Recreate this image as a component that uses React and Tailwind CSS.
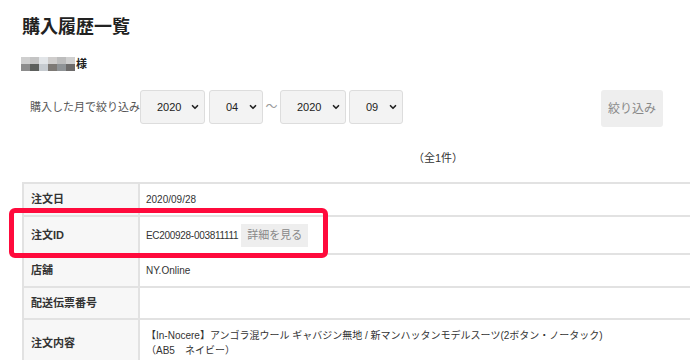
import React from 'react';
import { ChevronDown } from 'lucide-react';

const selects = [
  { value: '2020', width: 'w-[65px]' },
  { value: '04', width: 'w-[54px]' },
  { value: '2020', width: 'w-[66px]' },
  { value: '09', width: 'w-[54px]' },
];

const mosaicTop = ['#cfcfcf', '#c4c4c4', '#e2e5e8', '#cfcdcc', '#bdbdbd', '#d0d0d0'];
const mosaicBottom = ['#8c8c8c', '#5c5f5c', '#c6cbd0', '#7d7975', '#8f9396', '#6d6b6a'];

const SelectBox = ({ value, width }) => (
  <div className={`${width} h-[34px] flex items-center pl-[16px] pr-[4px] bg-[#f3f3f3] border border-[#dddddd] rounded-[3px] text-[11px] text-[#222]`}>
    <span>{value}</span>
    <ChevronDown size={10} strokeWidth={4} className="ml-auto text-[#222]" />
  </div>
);

const Row = ({ label, height, children, align = 'items-center' }) => (
  <div className={`flex border-b-2 border-[#e2e2e2] ${height}`}>
    <div className="w-[116px] shrink-0 flex items-center pl-[7px] bg-[#f7f7f7] border-r-2 border-[#e2e2e2] text-[11px] font-bold text-[#333]">
      {label}
    </div>
    <div className={`flex-1 flex ${align} pl-[6px] text-[10px] text-[#333]`}>{children}</div>
  </div>
);

export default function App() {
  return (
    <div
      className="relative w-[690px] h-[360px] overflow-hidden bg-white"
      style={{ fontFamily: '"Liberation Sans", "Noto Sans CJK JP", sans-serif' }}
    >
      {/* Heading */}
      <div className="pl-[22px] pt-[15px]">
        <h1 className="text-[18px] leading-[24px] font-bold text-[#222]">購入履歴一覧</h1>
      </div>

      {/* Customer name (mosaic) */}
      <div className="flex items-center pl-[21px] mt-[18px] h-[14px]">
        <div className="flex flex-col">
          <div className="flex">
            {mosaicTop.map((c, i) => (
              <div key={i} className="w-[9px] h-[7px]" style={{ backgroundColor: c }} />
            ))}
          </div>
          <div className="flex">
            {mosaicBottom.map((c, i) => (
              <div key={i} className="w-[9px] h-[7px]" style={{ backgroundColor: c }} />
            ))}
          </div>
        </div>
        <span className="ml-[1px] text-[11px] font-bold text-[#222]">様</span>
      </div>

      {/* Month filter */}
      <div className="flex items-start w-[663px] pl-[30px] mt-[19px]">
        <span className="w-[110px] leading-[34px] text-[11px] text-[#555]">購入した月で絞り込み</span>
        <SelectBox {...selects[0]} />
        <div className="w-[4px]" />
        <SelectBox {...selects[1]} />
        <span className="w-[17px] leading-[34px] text-center text-[12px] text-[#999]">～</span>
        <SelectBox {...selects[2]} />
        <div className="w-[3px]" />
        <SelectBox {...selects[3]} />
        <button className="ml-auto w-[62px] h-[37px] bg-[#eeeeee] rounded-[3px] text-[12px] text-[#888]">
          絞り込み
        </button>
      </div>

      {/* Count */}
      <div className="ml-[22px] w-[832px] mt-[24px] text-center text-[11px] leading-[14px] text-[#333]">
        （全1件）
      </div>

      {/* Order table */}
      <div className="ml-[22px] w-[832px] mt-[17px] border-t-2 border-l-2 border-[#e2e2e2]">
        <Row label="注文日" height="h-[33px]">2020/09/28</Row>
        <Row label="注文ID" height="h-[38px]">
          <span className="tracking-[-0.3px]">EC200928-003811111</span>
          <span className="ml-[3px] h-[23px] px-[6px] flex items-center bg-[#eeeeee] text-[11px] text-[#888]">
            詳細を見る
          </span>
        </Row>
        <Row label="店舗" height="h-[33px]">NY.Online</Row>
        <Row label="配送伝票番号" height="h-[32px]" />
        <Row label="注文内容" height="h-[48px]">
          <div className="leading-[15px]">
            <div>【In-Nocere】アンゴラ混ウール ギャバジン無地 / 新マンハッタンモデルスーツ(2ボタン・ノータック)</div>
            <div>（AB5　ネイビー）</div>
          </div>
        </Row>
      </div>

      {/* Highlight frame */}
      <div className="absolute left-[9px] top-[208px] w-[319px] h-[50px] border-[5px] border-[#ff0a3c] rounded-[6px]" />
    </div>
  );
}
